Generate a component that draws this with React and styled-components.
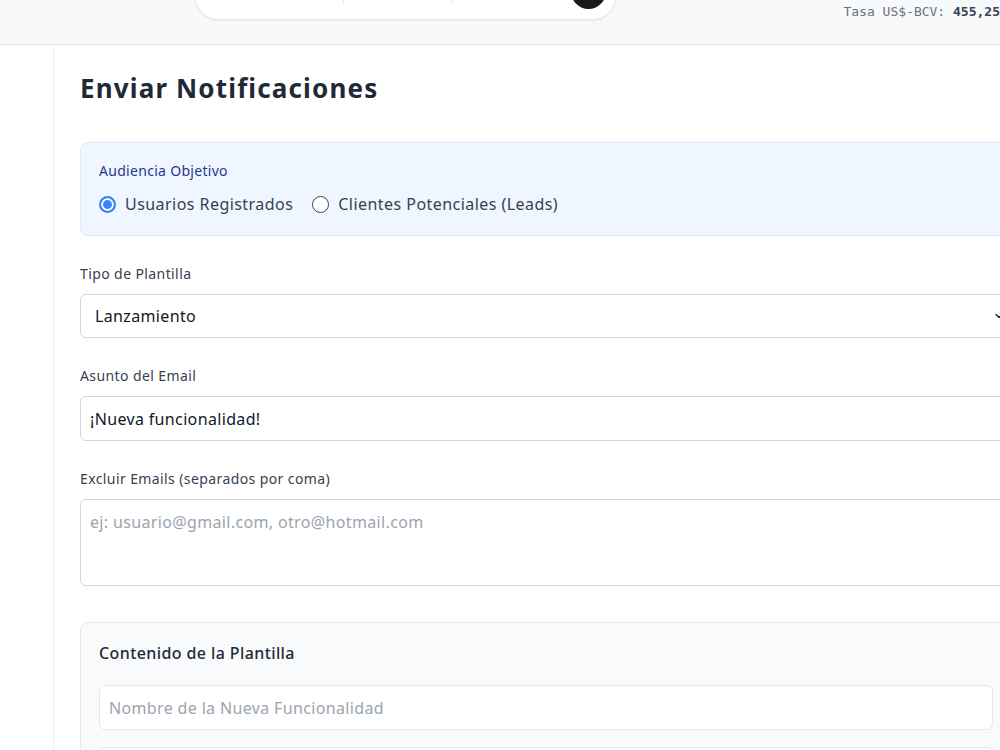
import styled, { createGlobalStyle } from "styled-components";

const Global = createGlobalStyle`
    * { box-sizing: border-box; }
    body {
        margin: 0;
        background: #FFFFFF;
        font-family: "Noto Sans", sans-serif;
        color: #374151;
        overflow: hidden;
    }
`

function Radio({ checked, children }) {
    return (
        <RadioLabel>
            <RadioDot checked={checked} />
            {children}
        </RadioLabel>
    );
}

function App() {
    return (
        <Pagina>
            <Global />
            <Topo>
                <Buscador>
                    <Segmento largo={147} />
                    <Divisor />
                    <Segmento largo={107} />
                    <Divisor />
                    <Segmento largo={119} />
                    <Boton />
                </Buscador>
                <Tasa>
                    Tasa US$-BCV: <strong>455,25</strong>
                </Tasa>
            </Topo>

            <Corpo>
                <Lateral />
                <Principal>
                    <Titulo>Enviar Notificaciones</Titulo>

                    <Formulario>
                        <Audiencia>
                            <AudienciaTitulo>Audiencia Objetivo</AudienciaTitulo>
                            <Opciones>
                                <Radio checked>Usuarios Registrados</Radio>
                                <Radio>Clientes Potenciales (Leads)</Radio>
                            </Opciones>
                        </Audiencia>

                        <Campo>
                            <Etiqueta>Tipo de Plantilla</Etiqueta>
                            <Selector>
                                Lanzamiento
                                <svg width="12" height="12" viewBox="0 0 24 24" fill="none" stroke="#111827" strokeWidth="2.5" strokeLinecap="round" strokeLinejoin="round">
                                    <path d="M6 9l6 6 6-6" />
                                </svg>
                            </Selector>
                        </Campo>

                        <Campo>
                            <Etiqueta>Asunto del Email</Etiqueta>
                            <Entrada defaultValue="¡Nueva funcionalidad!" />
                        </Campo>

                        <Campo>
                            <Etiqueta>Excluir Emails (separados por coma)</Etiqueta>
                            <Area placeholder="ej: usuario@gmail.com, otro@hotmail.com" />
                        </Campo>

                        <Contenido>
                            <ContenidoTitulo>Contenido de la Plantilla</ContenidoTitulo>
                            <EntradaSuave placeholder="Nombre de la Nueva Funcionalidad" />
                            <EntradaSuave placeholder="Descripción" />
                        </Contenido>
                    </Formulario>
                </Principal>
            </Corpo>
        </Pagina>
    );
}

const Pagina = styled.div`
    width: 1000px;
    height: 750px;
    overflow: hidden;
    display: flex;
    flex-direction: column;
`

const Topo = styled.header`
    height: 45px;
    flex-shrink: 0;
    background: #F8F9FB;
    border-bottom: 1px solid #E5E7EB;
    display: flex;
    align-items: flex-start;
    padding-left: 196px;
`

const Buscador = styled.div`
    width: 419px;
    height: 56px;
    margin-top: -37px;
    background: #FFFFFF;
    border-radius: 22px;
    box-shadow: 0px 1px 3px rgba(0, 0, 0, 0.12);
    display: flex;
    align-items: center;
`

const Segmento = styled.div`
    width: ${p => p.largo}px;
    height: 100%;
`

const Divisor = styled.div`
    width: 1px;
    height: 24px;
    background: #E5E7EB;
`

const Boton = styled.div`
    width: 35px;
    height: 35px;
    border-radius: 50%;
    background: #1A1A1A;
`

const Tasa = styled.div`
    margin-left: auto;
    margin-top: 4px;
    font-family: "DejaVu Sans Mono", monospace;
    font-size: 13px;
    line-height: 16px;
    color: #6B7280;
    white-space: nowrap;

    strong {
        color: #374151;
        font-weight: 700;
    }
`

const Corpo = styled.div`
    flex: 1;
    display: flex;
`

const Lateral = styled.aside`
    width: 54px;
    flex-shrink: 0;
    background: #FFFFFF;
    border-right: 1px solid #EEF0F3;
`

const Principal = styled.main`
    flex: 1;
    padding: 25px 0 0 26px;
    overflow: hidden;
`

const Titulo = styled.h1`
    margin: 0 0 36px 0;
    font-family: "Noto Sans", sans-serif;
    font-size: 26px;
    line-height: 36px;
    font-weight: 700;
    color: #1F2937;
    letter-spacing: 1.15px;
`

const Formulario = styled.div`
    width: 932px;
    display: flex;
    flex-direction: column;
`

const Audiencia = styled.div`
    background: #EFF6FF;
    border: 1px solid #DBEAFE;
    border-radius: 8px;
    padding: 18px 18px 19px 18px;
    display: flex;
    flex-direction: column;
    gap: 11px;
    margin-bottom: 28px;
`

const AudienciaTitulo = styled.div`
    font-size: 14px;
    line-height: 20px;
    color: #1E3A8A;
    letter-spacing: 0.3px;
`

const Opciones = styled.div`
    display: flex;
    gap: 19px;
`

const RadioLabel = styled.label`
    display: flex;
    align-items: center;
    gap: 9px;
    font-size: 16px;
    line-height: 24px;
    color: #374151;
    letter-spacing: 0.45px;
`

const RadioDot = styled.span`
    width: 17px;
    height: 17px;
    border-radius: 50%;
    background: ${p => p.checked ? "#3B82F6" : "#FFFFFF"};
    border: ${p => p.checked ? "2px solid #3B82F6" : "1.5px solid #374151"};
    box-shadow: ${p => p.checked ? "inset 0 0 0 2px #FFFFFF" : "none"};
`

const Campo = styled.div`
    display: flex;
    flex-direction: column;
    margin-bottom: 28px;
`

const Etiqueta = styled.label`
    font-size: 14px;
    line-height: 20px;
    color: #374151;
    letter-spacing: 0.4px;
    margin-bottom: 10px;
`

const Selector = styled.div`
    height: 44px;
    border: 1px solid #D1D5DB;
    border-radius: 6px;
    background: #FFFFFF;
    padding: 0 6px 0 14px;
    display: flex;
    align-items: center;
    justify-content: space-between;
    font-size: 16px;
    color: #111827;
    letter-spacing: 0.35px;
`

const Entrada = styled.input`
    height: 45px;
    border: 1px solid #D1D5DB;
    border-radius: 6px;
    padding: 0 9px;
    font-family: "Noto Sans", sans-serif;
    font-size: 16px;
    color: #111827;
    letter-spacing: 0.35px;
    outline: none;
`

const Area = styled.textarea`
    height: 87px;
    border: 1px solid #D1D5DB;
    border-radius: 6px;
    padding: 10px 9px;
    font-family: "Noto Sans", sans-serif;
    font-size: 16px;
    line-height: 24px;
    letter-spacing: 0.35px;
    resize: none;
    outline: none;

    &::placeholder {
        color: #9CA3AF;
    }
`

const Contenido = styled.section`
    margin-top: 8px;
    background: #F9FAFB;
    border: 1px solid #E5E7EB;
    border-radius: 8px;
    padding: 18px 18px;
    display: flex;
    flex-direction: column;
    gap: 17px;
`

const ContenidoTitulo = styled.h3`
    margin: 0 0 3px 0;
    font-size: 16px;
    line-height: 24px;
    font-weight: 500;
    color: #1F2937;
    letter-spacing: 0.4px;
`

const EntradaSuave = styled.input`
    height: 45px;
    border: 1px solid #E5E7EB;
    border-radius: 6px;
    padding: 0 9px;
    background: #FFFFFF;
    font-family: "Noto Sans", sans-serif;
    font-size: 16px;
    letter-spacing: 0.35px;
    outline: none;

    &::placeholder {
        color: #9CA3AF;
    }
`

export default App;
